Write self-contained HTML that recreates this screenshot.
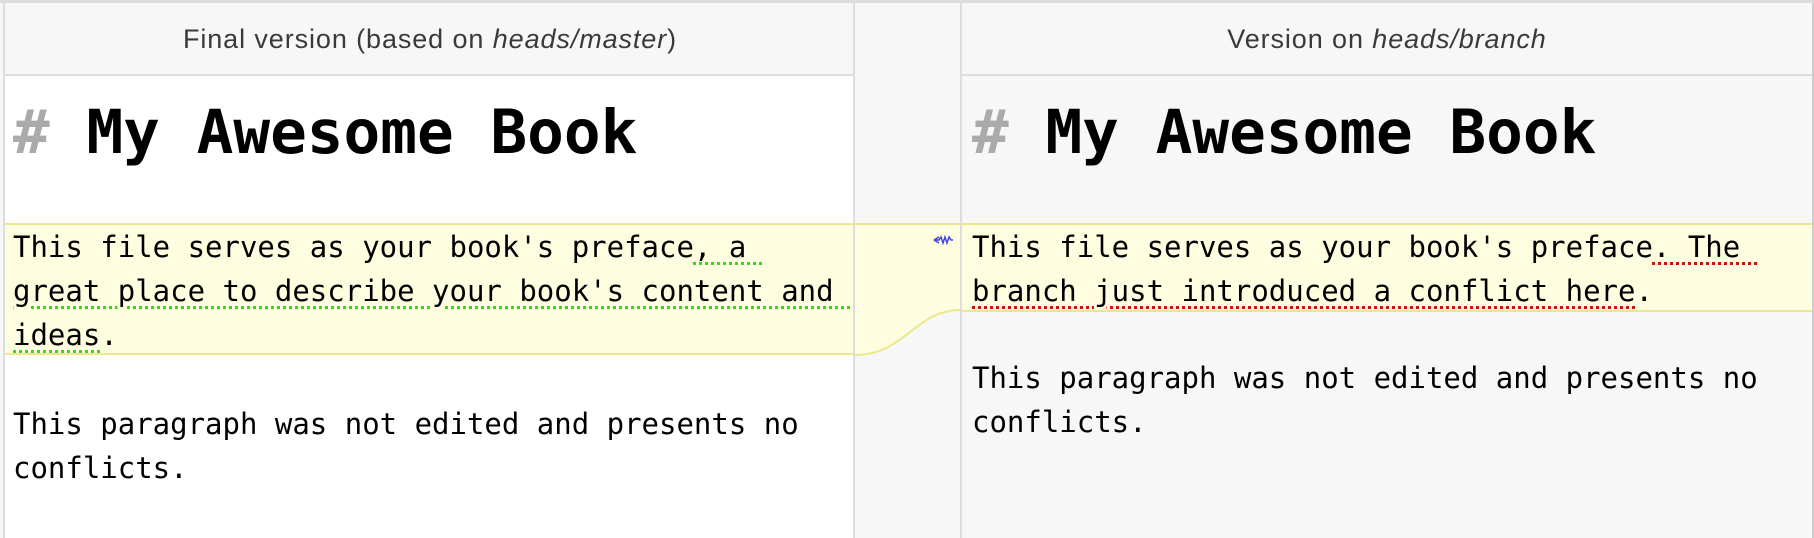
<!DOCTYPE html>
<html><head><meta charset="utf-8"><style>
html,body{margin:0;padding:0;width:1814px;height:538px;overflow:hidden;background:#f7f7f7;position:relative}
.a{position:absolute}
.hdr{font-family:"Liberation Sans",Arial,sans-serif;font-size:27px;letter-spacing:0.9px;line-height:30px;color:#3a3a3a;text-align:center;top:24px;white-space:nowrap}
.t{font-family:"DejaVu Sans Mono","Liberation Mono",monospace;font-weight:bold;font-size:61px;line-height:70px;top:98px;white-space:pre;color:#000}
.t b{color:#aaa}
.l{font-family:"DejaVu Sans Mono","Liberation Mono",monospace;font-size:29px;line-height:44px;white-space:pre;color:#000}
.g{text-decoration:underline dotted #33dd11;text-decoration-thickness:3px;text-underline-offset:5px}
.r{text-decoration:underline dotted #cc1111;text-decoration-thickness:3px;text-underline-offset:5px}
</style></head><body>
<div class="a" style="left:0;top:0;width:1814px;height:3px;background:#dcdcdc"></div>
<div class="a" style="left:3px;top:3px;width:852px;height:535px;background:#fff;border-left:2px solid #ddd;box-sizing:border-box"></div>
<div class="a" style="left:5px;top:3px;width:850px;height:71px;background:#f7f7f7"></div>
<div class="a" style="left:5px;top:74px;width:850px;height:2px;background:#ddd"></div>
<div class="a" style="left:853px;top:3px;width:2px;height:535px;background:#ddd"></div>
<div class="a" style="left:960px;top:3px;width:2px;height:535px;background:#ddd"></div>
<div class="a" style="left:1812px;top:3px;width:2px;height:535px;background:#ccc"></div>
<div class="a" style="left:962px;top:74px;width:850px;height:2px;background:#ddd"></div>
<div class="a" style="left:5px;top:223px;width:848px;height:132px;background:#fefde0;border-top:2px solid #ece88a;border-bottom:2px solid #ece88a;box-sizing:border-box"></div>
<div class="a" style="left:962px;top:223px;width:850px;height:89px;background:#fefde0;border-top:2px solid #ece88a;border-bottom:2px solid #ece88a;box-sizing:border-box"></div>
<svg class="a" style="left:855px;top:222px" width="105" height="136">
<path d="M0 2 H105 V88 C60 88 50 133 0 133 Z" fill="#fefde0"/>
<path d="M0 2 H105" stroke="#ece88a" stroke-width="2" fill="none"/>
<path d="M105 88 C60 88 50 133 0 133" stroke="#ece88a" stroke-width="2" fill="none"/>
<path d="M79 18 L84 15 M79 18 L84 21 M79 18 H84 L86 15 L88 21 L90 15 L92 21 L94 15 L96 18 H98" stroke="#4444dd" stroke-width="1.5" fill="none"/>
</svg>
<div class="a hdr" style="left:5px;width:850px">Final version (based on <i>heads/master</i>)</div>
<div class="a hdr" style="left:962px;width:850px">Version on <i>heads/branch</i></div>
<div class="a t" style="left:13px"><b>#</b> My Awesome Book</div>
<div class="a t" style="left:972px"><b>#</b> My Awesome Book</div>
<div class="a l" style="left:13px;top:225px">This file serves as your book's preface<span class="g">, a </span></div>
<div class="a l" style="left:13px;top:269px"><span class="g">great place to describe your book's content and </span></div>
<div class="a l" style="left:13px;top:313px"><span class="g">ideas</span>.</div>
<div class="a l" style="left:13px;top:402px">This paragraph was not edited and presents no</div>
<div class="a l" style="left:13px;top:446px">conflicts.</div>
<div class="a l" style="left:972px;top:225px">This file serves as your book's preface<span class="r">. The </span></div>
<div class="a l" style="left:972px;top:269px"><span class="r">branch just introduced a conflict here</span>.</div>
<div class="a l" style="left:972px;top:356px">This paragraph was not edited and presents no</div>
<div class="a l" style="left:972px;top:400px">conflicts.</div>
</body></html>
